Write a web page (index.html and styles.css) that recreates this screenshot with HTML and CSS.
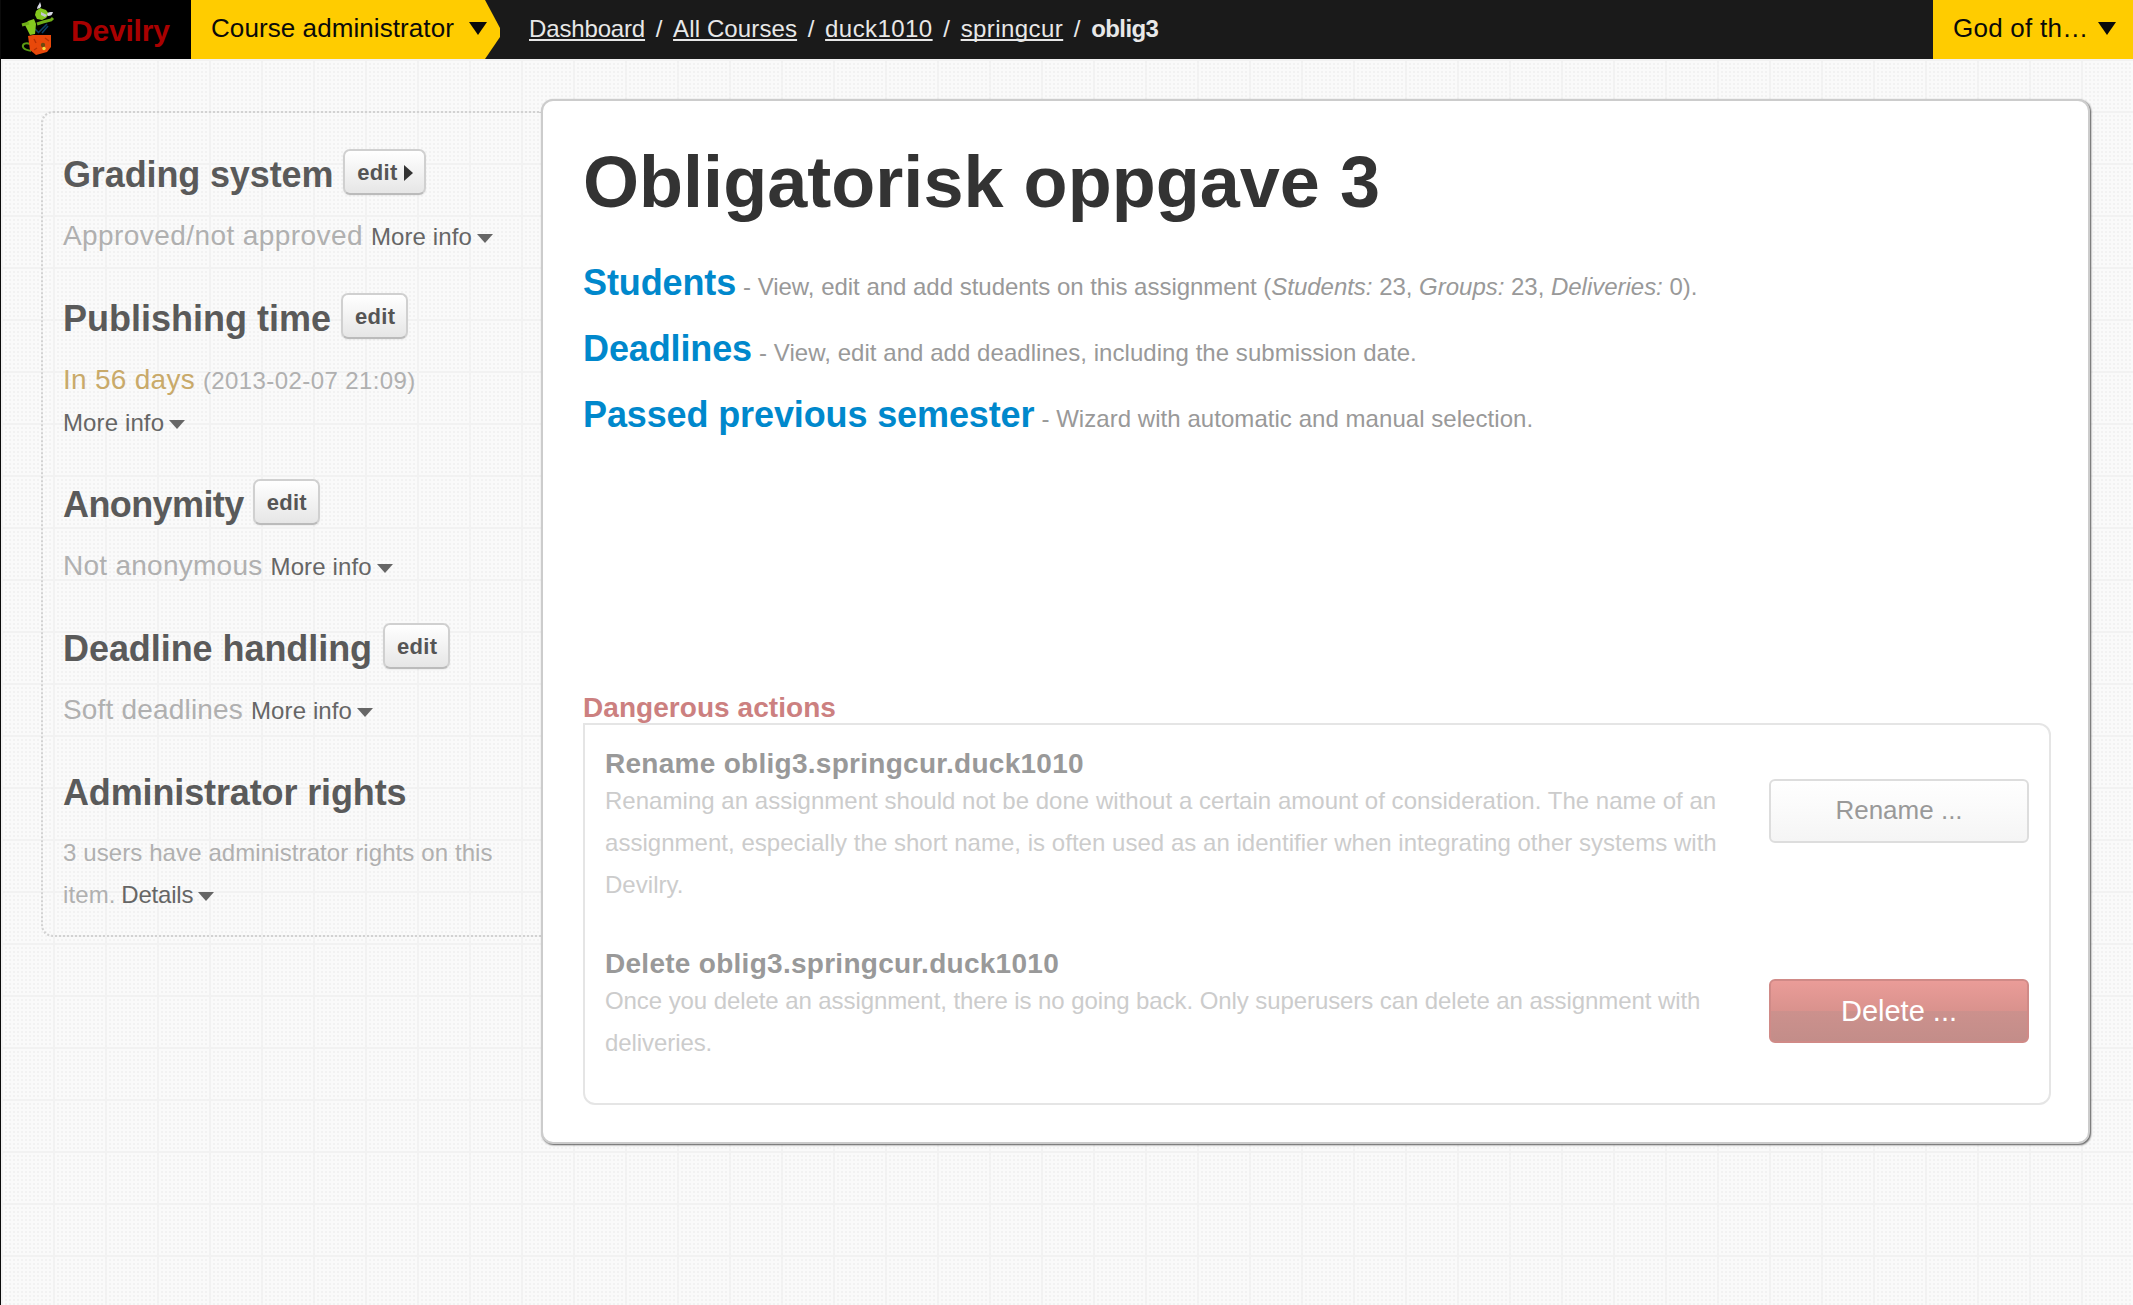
FILE: index.html
```html
<!DOCTYPE html>
<html lang="en">
<head>
<meta charset="utf-8">
<title>Devilry - oblig3</title>
<link rel="stylesheet" href="styles.css">
</head>
<body>
<header class="topbar">
  <a class="brand">
    <svg class="brand-logo" width="36" height="58" viewBox="0 0 36 58">
      <path d="M9 44c-4-2-8 0-7 3 1 3 5 3 8 4" fill="none" stroke="#5a9a12" stroke-width="2"/>
      <path d="M26 24l-9 9M27 26l-6 7M14 29l4 4" stroke="#0d3f66" stroke-width="1.6"/>
      <path d="M7 21l6-2 2 5 -1 10-5 1-3-6-2-4z" fill="#84c81e"/>
      <path d="M1 25l7-2M16 24l6-2 8-2 2-2" fill="none" stroke="#6fae18" stroke-width="3"/>
      <path d="M15 11l4-3 6 2 3 4-3 4-4 2-5-1-2-4z" fill="#84c81e"/>
      <path d="M16 9c0-3 2-4 3-7 1 3 2 4 0 6zM27 16c3 0 4-1 5-4-3 0-5 0-6 2z" fill="#d8d8e4"/>
      <path d="M20 12l6 3-2 2-4-2z" fill="#c4c8d0"/>
      <path d="M7 36l5-1 18 0v12l-4 5-11 3-6-5z" fill="#e8480a"/>
      <path d="M13 39l2 4M24 38l4 3M13 50l3-2" fill="none" stroke="#b83206" stroke-width="1.4"/>
      <circle cx="22" cy="45" r="2.2" fill="#6b4a10"/><circle cx="23" cy="48.5" r="1.7" fill="#f0e040"/>
    </svg>
    <span class="brand-name">Devilry</span>
  </a>
  <div class="role">
    <span class="role-name">Course administrator</span>
    <svg width="18" height="13" viewBox="0 0 18 13"><path d="M0 0h18L9 13z" fill="#0a0a0a"/></svg>
  </div>
  <nav class="breadcrumb">
    <a>Dashboard</a><span>/</span><a>All Courses</a><span>/</span><a>duck1010</a><span>/</span><a>springcur</a><span>/</span><strong>oblig3</strong>
  </nav>
  <div class="user">
    <span class="user-name">God of th…</span>
    <svg width="18" height="13" viewBox="0 0 18 13"><path d="M0 0h18L9 13z" fill="#0a0a0a"/></svg>
  </div>
</header>

<div class="page">
  <aside class="sidebar">
    <section class="setting">
      <h2 class="grading">Grading system <button class="edit">edit<i class="caret-right"></i></button></h2>
      <p><span class="approved">Approved/not approved</span> <a class="more">More info<i class="caret"></i></a></p>
    </section>
    <section class="setting">
      <h2 class="publishing">Publishing time <button class="edit">edit</button></h2>
      <p><span class="countdown">In 56 days</span> <small>(2013-02-07 21:09)</small><br><a class="more">More info<i class="caret"></i></a></p>
    </section>
    <section class="setting">
      <h2 class="anonymity">Anonymity <button class="edit">edit</button></h2>
      <p class="anonymous">Not anonymous <a class="more">More info<i class="caret"></i></a></p>
    </section>
    <section class="setting">
      <h2 class="handling">Deadline handling <button class="edit">edit</button></h2>
      <p>Soft deadlines <a class="more">More info<i class="caret"></i></a></p>
    </section>
    <section class="setting">
      <h2 class="grading">Administrator rights</h2>
      <p class="rights">3 users have administrator rights on this item. <a class="more">Details<i class="caret"></i></a></p>
    </section>
  </aside>

  <main class="panel">
    <h1>Obligatorisk oppgave 3</h1>
    <ul class="links">
      <li><a>Students</a><span class="tight">- View, edit and add students on this assignment (<em>Students:</em> 23, <em>Groups:</em> 23, <em>Deliveries:</em> 0).</span></li>
      <li><a>Deadlines</a><span>- View, edit and add deadlines, including the submission date.</span></li>
      <li><a>Passed previous semester</a><span>- Wizard with automatic and manual selection.</span></li>
    </ul>
    <h3 class="danger-title">Dangerous actions</h3>
    <div class="danger">
      <div class="action">
        <div class="action-text">
          <h4>Rename oblig3.springcur.duck1010</h4>
          <p>Renaming an assignment should not be done without a certain amount of consideration. The name of an assignment, especially the short name, is often used as an identifier when integrating other systems with Devilry.</p>
        </div>
        <button class="btn">Rename ...</button>
      </div>
      <div class="action">
        <div class="action-text">
          <h4>Delete oblig3.springcur.duck1010</h4>
          <p class="tight">Once you delete an assignment, there is no going back. Only superusers can delete an assignment with deliveries.</p>
        </div>
        <button class="btn btn-danger">Delete ...</button>
      </div>
    </div>
  </main>
</div>
</body>
</html>
```

FILE: styles.css
```css
* { box-sizing: border-box; }

body {
  margin: 0;
  min-height: 1305px;
  border-left: 1px solid #0b0b0b;
  font-family: "Liberation Sans", Arial, sans-serif;
  color: #333;
  background-color: #fafafa;
  background-image:
    linear-gradient(90deg, #f2f2f2 2px, transparent 2px),
    linear-gradient(#f2f2f2 2px, transparent 2px),
    conic-gradient(from 0deg at 2px 2px, transparent 75%, #f2f2f2 0);
  background-size: 52px 52px, 52px 52px, 4px 4px;
  background-position: 1px 7px, 1px 7px, 1px 3px;
  background-origin: border-box;
}

h1, h2, h3, h4, p, ul { margin: 0; padding: 0; }

/* Top bar */
.topbar {
  display: flex;
  height: 59px;
  background: #1a1a1a;
}
.brand {
  display: flex;
  width: 190px;
  padding-left: 20px;
  background: #000;
}
.brand-name {
  margin-left: 14px;
  font-size: 30px;
  font-weight: 700;
  line-height: 61px;
  letter-spacing: -0.2px;
  color: #a90000;
}
.role, .user {
  display: flex;
  color: #0a0a0a;
  background: #fc0;
  font-size: 26px;
  line-height: 57px;
}
.role {
  width: 309px;
  padding-left: 20px;
  clip-path: polygon(0 0, 294px 0, 309px 28px, 309px 37px, 294px 59px, 0 59px);
}
.role svg, .user svg { margin-top: 22px; }
.role-name { width: 258px; letter-spacing: 0.08px; white-space: nowrap; }
.user { width: 200px; padding-left: 20px; margin-left: auto; }
.user-name { width: 145px; letter-spacing: 0.25px; }

.breadcrumb {
  display: flex;
  margin-left: 29px;
  font-size: 24px;
  line-height: 58px;
  color: #e8e8e8;
}
.breadcrumb a {
  text-decoration: underline;
  text-decoration-thickness: 2px;
  text-underline-offset: 2px;
  text-decoration-skip-ink: none;
  letter-spacing: 0.43px;
}
.breadcrumb a:first-child { letter-spacing: -0.15px; }
.breadcrumb a:nth-child(3) { letter-spacing: 0.12px; }
.breadcrumb span { width: 28px; text-align: center; }
.breadcrumb strong { letter-spacing: -0.6px; }

/* Page columns */
.page {
  display: flex;
  align-items: flex-start;
  padding: 40px 43px 0 40px;
}
.sidebar {
  width: 500px;
  height: 826px;
  margin-top: 12px;
  padding: 36px 20px 18px 20px;
  border: 2px dotted #d2d2d2;
  border-right: 0;
  border-radius: 12px 0 0 12px;
}
.setting + .setting { margin-top: 36px; }
.setting h2 {
  display: flex;
  gap: 11px;
  height: 50px;
  font-size: 36px;
  line-height: 52px;
  color: #5a5a5a;
  white-space: nowrap;
}
.setting .grading { gap: 10px; letter-spacing: -0.13px; }
.setting .publishing { gap: 10px; }
.setting .handling { letter-spacing: -0.06px; }
.setting .anonymity { gap: 9px; letter-spacing: -0.6px; }
.setting p {
  margin-top: 16px;
  font-size: 28px;
  line-height: 42px;
  letter-spacing: 0.18px;
  color: #b0b0b0;
}
.setting p.anonymous { letter-spacing: 0.26px; }
.setting p.rights { margin-top: 15px; font-size: 24px; letter-spacing: 0.1px; }
.setting .approved { letter-spacing: 0.42px; }
.setting .countdown { color: #c9aa6a; letter-spacing: 0.28px; }
.setting small { font-size: 24px; line-height: 24px; letter-spacing: 0.4px; }
.setting .more { font-size: 24px; line-height: 24px; letter-spacing: 0.12px; color: #666; white-space: nowrap; }
.setting .rights .more { margin-left: -1px; letter-spacing: -0.2px; }
.caret {
  display: inline-block;
  margin-left: 5px;
  border: 8px solid transparent;
  border-top: 9px solid #666;
  border-bottom: 0;
  vertical-align: 2px;
}
.edit {
  display: flex;
  align-items: center;
  height: 46px;
  padding: 2px 11px 0 12px;
  border: 2px solid #d0d0d0;
  border-bottom-color: #bbb;
  border-radius: 7px;
  background: linear-gradient(#fff, #e6e6e6);
  box-shadow: 0 1px 2px rgba(0, 0, 0, 0.06);
  font: 700 22px/42px "Liberation Sans", Arial, sans-serif;
  letter-spacing: 0.3px;
  color: #555;
}
.caret-right {
  margin-left: 6px;
  border: 8px solid transparent;
  border-left: 9px solid #333;
  border-right: 0;
}

/* Assignment panel */
.panel {
  flex: 1;
  height: 1045px;
  padding: 41px 37px 0 40px;
  border: 2px solid #ccc;
  border-radius: 12px;
  background: #fff;
  box-shadow: 1px 1px 2px #555;
}
.panel h1 {
  height: 80px;
  font-size: 72px;
  line-height: 80px;
  letter-spacing: 0.04px;
  color: #333;
}
.links { margin-top: 28px; list-style: none; }
.links li {
  display: flex;
  align-items: baseline;
  gap: 7px;
  height: 66px;
  line-height: 66px;
  white-space: nowrap;
}
.links a { font-size: 36px; font-weight: 700; letter-spacing: -0.12px; color: #08c; }
.links span { font-size: 24px; letter-spacing: 0.05px; color: #999; }
.links .tight { letter-spacing: -0.02px; }

.danger-title {
  height: 32px;
  margin-top: 243px;
  font-size: 28px;
  line-height: 34px;
  letter-spacing: 0.05px;
  color: #cc8080;
}
.danger {
  height: 382px;
  padding: 24px 20px;
  border: 2px solid #e5e5e5;
  border-radius: 0 12px 12px 12px;
}
.action { display: flex; align-items: flex-start; justify-content: space-between; }
.action + .action { margin-top: 43px; }
.action-text { width: 1125px; }
.action h4 {
  margin-bottom: 2px;
  font-size: 28px;
  line-height: 29px;
  letter-spacing: 0.28px;
  color: #999;
}
.action p { font-size: 24px; line-height: 42px; letter-spacing: 0.03px; color: #ccc; }
.action .tight { letter-spacing: -0.08px; }
.btn {
  width: 260px;
  height: 64px;
  margin-top: 30px;
  padding: 0 0 2px;
  border: 2px solid #ddd;
  border-radius: 6px;
  background: linear-gradient(#fff, #f5f5f5);
  font: 26px/52px "Liberation Sans", Arial, sans-serif;
  color: #999;
}
.btn-danger {
  padding-bottom: 0;
  border-color: #d08a87;
  background: linear-gradient(#ea9c98, #d9928d 50%, #cc918d 50%, #c38d89);
  font-size: 29px;
  color: #fff;
}
```
